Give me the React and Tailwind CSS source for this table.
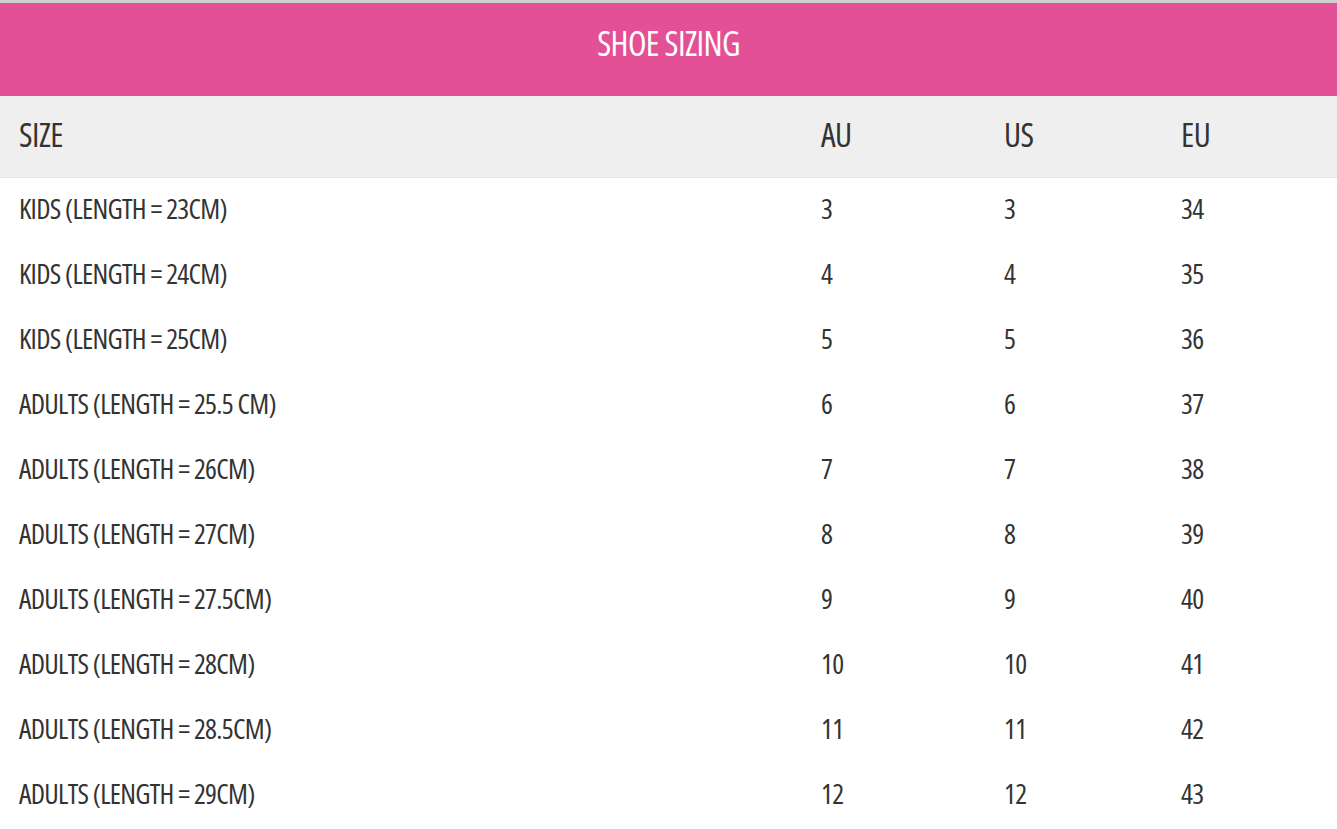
const rows = [
  ["KIDS (LENGTH = 23CM)", "3", "3", "34"],
  ["KIDS (LENGTH = 24CM)", "4", "4", "35"],
  ["KIDS (LENGTH = 25CM)", "5", "5", "36"],
  ["ADULTS (LENGTH = 25.5 CM)", "6", "6", "37"],
  ["ADULTS (LENGTH = 26CM)", "7", "7", "38"],
  ["ADULTS (LENGTH = 27CM)", "8", "8", "39"],
  ["ADULTS (LENGTH = 27.5CM)", "9", "9", "40"],
  ["ADULTS (LENGTH = 28CM)", "10", "10", "41"],
  ["ADULTS (LENGTH = 28.5CM)", "11", "11", "42"],
  ["ADULTS (LENGTH = 29CM)", "12", "12", "43"],
];

export default function App() {
  return (
    <div className="w-full bg-white font-['Open_Sans',sans-serif] font-stretch-condensed font-normal text-[#333]">
      <div className="border-t-[3px] border-[#cfcfcf] bg-[#e45096] h-[96px] flex items-center justify-center">
        <h1 className="text-white text-[34px] leading-none tracking-[-0.6px] -mt-[13px]">SHOE SIZING</h1>
      </div>
      <div className="grid grid-cols-[802px_183px_177px_1fr] h-[82px] items-center bg-[#efefef] border-b border-[#e6e6e6] text-[33px] leading-none tracking-[-0.5px]">
        <div className="pl-[19px] -mt-[5px]">SIZE</div>
        <div className="pl-[19px] -mt-[5px]">AU</div>
        <div className="pl-[19px] -mt-[5px]">US</div>
        <div className="pl-[19px] -mt-[5px]">EU</div>
      </div>
      {rows.map((r) => (
        <div key={r[0]} className="grid grid-cols-[802px_183px_177px_1fr] h-[65px] items-center text-[28px] leading-none tracking-[-0.7px]">
          {r.map((c, i) => (
            <div key={i} className="pl-[19px] -mt-[6px]">{c}</div>
          ))}
        </div>
      ))}
    </div>
  );
}
